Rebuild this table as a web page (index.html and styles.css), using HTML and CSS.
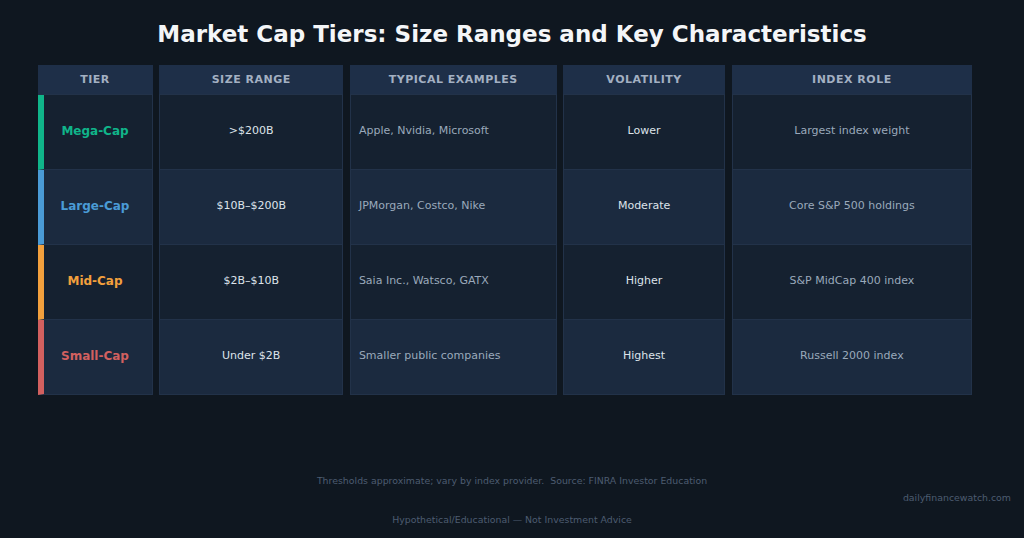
FILE: index.html
```html
<!DOCTYPE html>
<html lang="en">
<head>
<meta charset="utf-8">
<title>Market Cap Tiers</title>
<link rel="stylesheet" href="styles.css">
</head>
<body>
<main class="page">
  <h1 class="title">Market Cap Tiers: Size Ranges and Key Characteristics</h1>
  <div class="table">
    <div class="cell head">TIER</div>
    <div class="cell head">SIZE RANGE</div>
    <div class="cell head">TYPICAL EXAMPLES</div>
    <div class="cell head">VOLATILITY</div>
    <div class="cell head">INDEX ROLE</div>

    <div class="cell odd tier mega">Mega-Cap</div>
    <div class="cell odd light">&gt;$200B</div>
    <div class="cell odd muted left">Apple, Nvidia, Microsoft</div>
    <div class="cell odd light">Lower</div>
    <div class="cell odd muted">Largest index weight</div>

    <div class="cell even tier large">Large-Cap</div>
    <div class="cell even light">$10B–$200B</div>
    <div class="cell even muted left">JPMorgan, Costco, Nike</div>
    <div class="cell even light">Moderate</div>
    <div class="cell even muted">Core S&amp;P 500 holdings</div>

    <div class="cell odd tier mid">Mid-Cap</div>
    <div class="cell odd light">$2B–$10B</div>
    <div class="cell odd muted left">Saia Inc., Watsco, GATX</div>
    <div class="cell odd light">Higher</div>
    <div class="cell odd muted">S&amp;P MidCap 400 index</div>

    <div class="cell even tier small">Small-Cap</div>
    <div class="cell even light">Under $2B</div>
    <div class="cell even muted left">Smaller public companies</div>
    <div class="cell even light">Highest</div>
    <div class="cell even muted">Russell 2000 index</div>
  </div>
  <footer class="footer">
    <p class="note">Thresholds approximate; vary by index provider.&nbsp; Source: FINRA Investor Education</p>
    <p class="domain">dailyfinancewatch.com</p>
    <p class="disclaimer">Hypothetical/Educational — Not Investment Advice</p>
  </footer>
</main>
</body>
</html>
```

FILE: styles.css
```css
* { box-sizing: border-box; }
html, body {
  margin: 0;
  padding: 0;
  background: #0f1720;
}
body {
  font-family: "DejaVu Sans", "Liberation Sans", sans-serif;
  width: 1024px;
  height: 538px;
  overflow: hidden;
}
.page {
  display: flex;
  flex-direction: column;
}
.title {
  margin: 20px 0 0;
  height: 28px;
  line-height: 28px;
  font-size: 23px;
  font-weight: bold;
  color: #f4f6f8;
  text-align: center;
}
.table {
  margin: 17px 0 0 37.5px;
  display: grid;
  grid-template-columns: 115px 184.4px 206.7px 162px 240.6px;
  grid-template-rows: 30px repeat(4, 75px);
  column-gap: 6.5px;
}
.cell {
  display: flex;
  align-items: center;
  justify-content: center;
  font-size: 11px;
  padding-bottom: 3px;
  border: 1px solid #223249;
  border-top: none;
}
.head {
  background: #1e2f48;
  color: #a3b0c2;
  font-weight: bold;
  letter-spacing: 0.5px;
  padding-bottom: 1px;
  border: none;
  border-bottom: 1px solid #223249;
}
.odd { background: #152130; }
.even { background: #1b2a3f; }
.light { color: #dde3ea; }
.muted { color: #9aa9bb; }
.left {
  justify-content: flex-start;
  padding-left: 8px;
}
.tier {
  font-size: 12px;
  font-weight: bold;
  border-left-width: 6px;
  padding-right: 5px;
}
.mega { color: #10b58a; border-left-color: #10b58a; }
.large { color: #4a9bd6; border-left-color: #4a9bd6; }
.mid { color: #f2a03d; border-left-color: #f2a03d; }
.small { color: #d2605f; border-left-color: #d2605f; }
.footer {
  margin-top: 80px;
  display: flex;
  flex-direction: column;
  font-size: 9.4px;
  color: #4d5c70;
}
.footer p {
  margin: 0;
  height: 12px;
  line-height: 12px;
}
.note { text-align: center; }
.domain {
  margin-top: 5px !important;
  text-align: right;
  padding-right: 13px;
}
.disclaimer {
  margin-top: 10px !important;
  text-align: center;
}
```
